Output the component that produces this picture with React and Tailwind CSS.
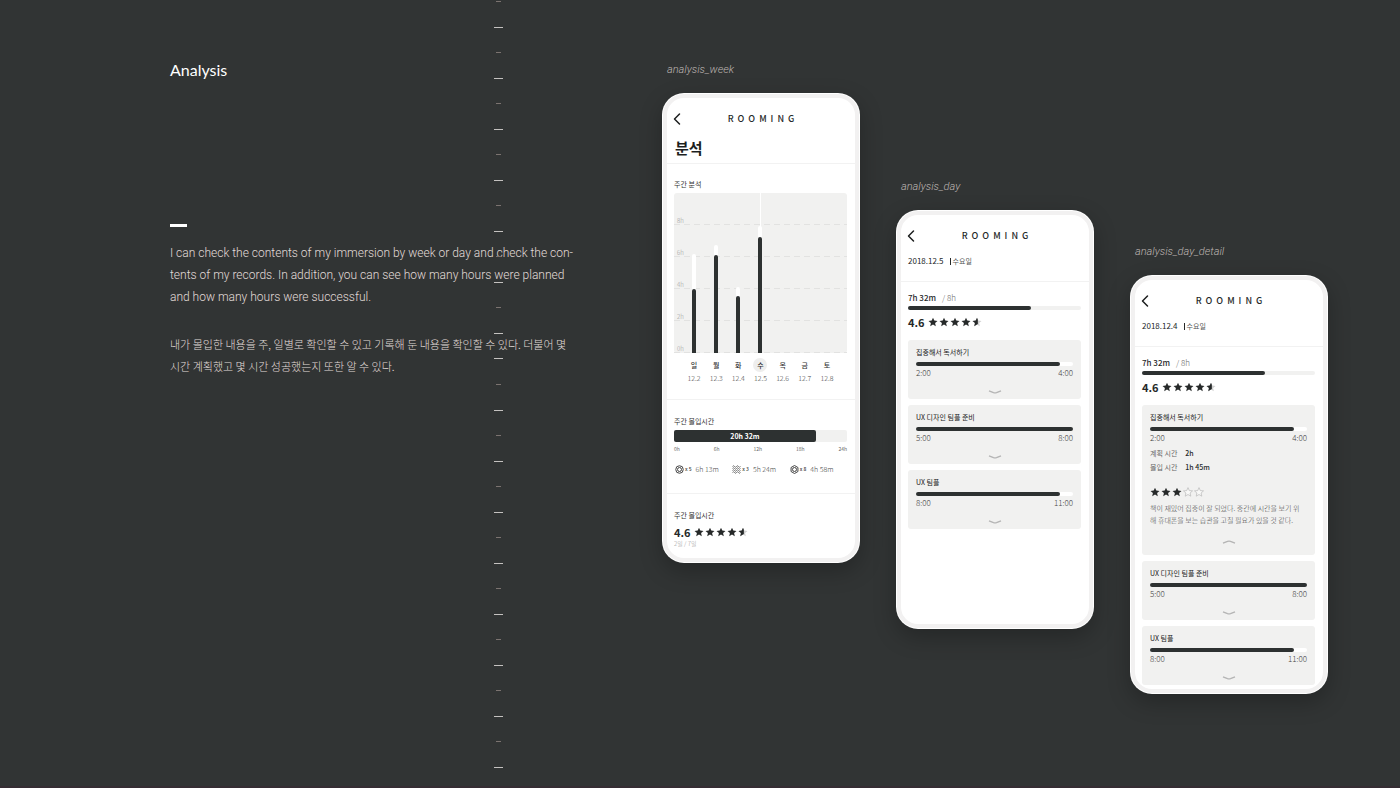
import { ChevronLeft } from "lucide-react";

const CJK = "font-['Noto_Sans_CJK_KR',sans-serif]";

const STAR = "M12 1.5l3.1 7.1 7.7.7-5.8 5.1 1.7 7.6L12 18l-6.7 4 1.7-7.6L1.2 9.3l7.7-.7z";

function Star({ kind = "full" }) {
  if (kind === "empty") {
    return (
      <svg viewBox="0 0 24 24" className="size-[10px]" fill="#f8f8f7" stroke="#b5b5b5" strokeWidth="1.6" aria-hidden="true">
        <path d={STAR} />
      </svg>
    );
  }
  if (kind === "half") {
    return (
      <svg viewBox="0 0 24 24" className="size-[10px]" aria-hidden="true">
        <path d={STAR} fill="#d0d0d0" />
        <path d="M12 1.5V18l-6.7 4 1.7-7.6L1.2 9.3l7.7-.7zM12 1.5l2 5V17l-2 1z" fill="#262929" />
      </svg>
    );
  }
  return (
    <svg viewBox="0 0 24 24" className="size-[10px]" fill="#262929" aria-hidden="true">
      <path d={STAR} />
    </svg>
  );
}

function Rating() {
  return (
    <div className="flex items-center gap-[3px] text-[#262929]">
      <span className="text-[11px] leading-4 font-bold">4.6</span>
      <span className="flex items-center gap-px">
        <Star />
        <Star />
        <Star />
        <Star />
        <Star kind="half" />
      </span>
    </div>
  );
}

function isLongTick(i) {
  return i < 14 ? i % 2 === 1 : i % 2 === 0;
}

function Ruler() {
  return (
    <div className="absolute top-px right-[159px] flex h-[767px] w-[9px] flex-col items-center justify-between" aria-hidden="true">
      {Array.from({ length: 31 }, (_, i) =>
        isLongTick(i) ? (
          <span key={i} className="h-px w-[9px] bg-[#c4c2c0]" />
        ) : (
          <span key={i} className="h-px w-[5px] bg-[#7b7370]" />
        )
      )}
    </div>
  );
}

function Phone({ label, height, className, children }) {
  return (
    <section className={`w-[198px] shrink-0 ${className}`}>
      <h2 className="mb-[15px] pl-[5px] text-[11px] leading-4 font-light italic text-[#bdb5b2] font-['Roboto',sans-serif]">{label}</h2>
      <div className={`rounded-[22px] bg-white p-px shadow-[0_8px_22px_rgba(0,0,0,0.25)] ${height}`}>
        <div className="h-full overflow-hidden rounded-[21px] border-4 border-[#f2f1f1] bg-white">
          <header className="relative flex h-10 items-center justify-center pt-[2px]">
            <button type="button" aria-label="Back" className="absolute left-0 text-[#1d1f1f]">
              <ChevronLeft className="size-5" strokeWidth={1.8} />
            </button>
            <span className="pl-1 text-[9px] leading-4 font-medium tracking-[4px] text-[#262929]">ROOMING</span>
          </header>
          {children}
        </div>
      </div>
    </section>
  );
}

function Bar({ fill, track }) {
  return (
    <div className={`h-1 rounded-full ${track}`}>
      <div className={`h-1 rounded-full bg-[#2d3131] ${fill}`} />
    </div>
  );
}

function Toggle({ open }) {
  return (
    <button type="button" aria-label={open ? "Collapse" : "Expand"} className="mx-auto block">
      <svg viewBox="0 0 14 4" className={`h-1 w-[14px] ${open ? "rotate-180" : ""}`} fill="none" stroke="#b4b4b4" strokeWidth="1.4" aria-hidden="true">
        <path d="M1 .8L5.500 2.600Q7 3.100 8.500 2.600L13 .8" />
      </svg>
    </button>
  );
}

function Session({ title, from, to, fill, children }) {
  return (
    <article className={`rounded-[3px] bg-[#f1f1f0] px-2 pt-[6px] ${children ? "pb-[11px]" : "pb-[5px]"}`}>
      <h3 className="text-[7px] leading-3 text-[#222]">{title}</h3>
      <div className="mt-1">
        <Bar fill={fill} track="bg-white" />
      </div>
      <div className="mt-px flex justify-between text-[8px] leading-3 font-light text-[#444]">
        <span>{from}</span>
        <span>{to}</span>
      </div>
      {children}
      <div className={children ? "mt-[14px]" : "mt-[11px]"}>
        <Toggle open={Boolean(children)} />
      </div>
    </article>
  );
}

function DaySummary({ date }) {
  return (
    <>
      <div className="flex h-[27px] items-start border-b border-[#f2f2f2] pr-2 pl-[7px] leading-3">
        <span className="text-[8px] text-[#1d1f1f]">{date}</span>
        <span className="mt-[3px] ml-[6px] h-[7px] w-px bg-[#262929]" />
        <span className="ml-[2px] text-[7px] text-[#555]">수요일</span>
      </div>
      <div className="pt-[10px] pr-2 pl-[7px]">
        <div className="text-[8px] leading-3 text-[#262929]">
          <span className="font-medium">7h 32m</span>
          <span className="ml-[6px] font-light text-[#666]">/ 8h</span>
        </div>
        <div className="mt-[2px]">
          <Bar fill="w-[71%]" track="bg-[#f1f1f0]" />
        </div>
        <div className="mt-1">
          <Rating />
        </div>
      </div>
    </>
  );
}

const DAYS = [
  { day: "일", date: "12.2", plan: "h-[99px]", done: "h-[64px]" },
  { day: "월", date: "12.3", plan: "h-[108px]", done: "h-[98px]" },
  { day: "화", date: "12.4", plan: "h-[66px]", done: "h-[57px]" },
  { day: "수", date: "12.5", plan: "h-[127px]", done: "h-[116px]", today: true },
  { day: "목", date: "12.6" },
  { day: "금", date: "12.7" },
  { day: "토", date: "12.8" },
];

function WeekChart() {
  return (
    <div>
      <div className="relative h-[160px] rounded-[3px] bg-[#f1f1f0]">
        <div className="flex h-full flex-col">
          {["8h", "6h", "4h", "2h", "0h"].map((h) => (
            <div key={h} className="flex h-8 shrink-0 flex-col justify-end">
              <span className="pl-[3px] text-[6px] leading-[6px] font-light text-[#999]">{h}</span>
              <span className="h-px bg-[repeating-linear-gradient(90deg,#e2e2e1_0_6px,transparent_6px_10px)]" />
            </div>
          ))}
        </div>
        <div className="absolute inset-0 grid grid-cols-7 px-[9px]">
          {DAYS.map((d) => (
            <div key={d.date} className="relative flex items-end justify-center">
              {d.today && <span className="absolute inset-y-0 w-px bg-white" />}
              {d.plan && (
                <div className={`relative flex w-1 items-end rounded-t-full bg-white ${d.plan}`}>
                  <div className={`w-1 rounded-t-full bg-[#2d3131] ${d.done}`} />
                </div>
              )}
            </div>
          ))}
        </div>
      </div>
      <div className="mt-[5px] grid grid-cols-7 px-[9px] text-center">
        {DAYS.map((d) => (
          <div key={d.date}>
            <div className={`mx-auto size-[14px] rounded-full text-[7px] leading-[14px] font-medium text-[#333] ${d.today ? "bg-[#eeeeed]" : ""}`}>{d.day}</div>
            <div className="text-[7px] leading-3 font-light text-[#444]">{d.date}</div>
          </div>
        ))}
      </div>
    </div>
  );
}

function Badge({ kind }) {
  return (
    <svg viewBox="0 0 18 18" className="size-[9px]" fill="none" stroke="#444" strokeWidth="2" aria-hidden="true">
      {kind === "ring" && (
        <>
          <circle cx="9" cy="9" r="7.5" />
          <circle cx="9" cy="9" r="4" />
        </>
      )}
      {kind === "wave" && (
        <path strokeWidth="1.5" d="M1 3q2-3 4 0t4 0 4 0 4 0M1 7q2-3 4 0t4 0 4 0 4 0M1 11q2-3 4 0t4 0 4 0 4 0M1 15q2-3 4 0t4 0 4 0 4 0" />
      )}
      {kind === "hex" && (
        <>
          <path d="M9 1l6.900 4v8L9 17l-6.900-4V5z" />
          <circle cx="9" cy="9" r="4" />
        </>
      )}
    </svg>
  );
}

const TOTALS = [
  { kind: "ring", count: "x 5", time: "6h 13m" },
  { kind: "wave", count: "x 3", time: "5h 24m" },
  { kind: "hex", count: "x 8", time: "4h 58m" },
];

export default function App() {
  return (
    <main className={`flex min-h-screen items-start border-b-2 border-[#352d33] bg-[#313434] pr-[72px] ${CJK}`}>
      <section className="relative min-w-0 flex-1 pt-[58px] pl-[170px]">
        <h1 className="text-[16px] leading-6 text-white font-['Lato',sans-serif]">Analysis</h1>
        <div className="mt-[142px] h-[3px] w-[17px] bg-white" />
        <div className="mt-[15px] whitespace-nowrap text-[#e2dcd9]">
          <p className="text-[12px] leading-[22px] font-light font-['Roboto',sans-serif]">
            I can check the contents of my immersion by week or day and check the con-
            <br />
            tents of my records. In addition, you can see how many hours were planned
            <br />
            and how many hours were successful.
          </p>
          <p className="mt-[25px] text-[11px] leading-[22px] font-light">
            내가 몰입한 내용을 주, 일별로 확인할 수 있고 기록해 둔 내용을 확인할 수 있다. 더불어 몇
            <br />
            시간 계획했고 몇 시간 성공했는지 또한 알 수 있다.
          </p>
        </div>
        <Ruler />
      </section>

      <div className="flex shrink-0 items-start gap-9">
        <Phone label="analysis_week" height="h-[470px]" className="pt-[62px]">
          <h3 className="h-[26px] border-b border-[#f2f2f2] px-2 text-[15px] leading-5 font-bold text-[#1d1f1f]">분석</h3>
          <div className="h-[236px] border-b border-[#f2f2f2] pt-[14px] pr-2 pl-[7px]">
            <h4 className="mb-[3px] text-[7px] leading-3 text-[#333]">주간 분석</h4>
            <WeekChart />
          </div>
          <div className="h-[94px] border-b border-[#f2f2f2] pt-[15px] pr-2 pl-[7px]">
            <h4 className="text-[7px] leading-3 text-[#333]">주간 몰입시간</h4>
            <div className="mt-[3px] h-3 rounded-[2px] bg-[#f1f1f0]">
              <div className="w-[82%] rounded-[2px] bg-[#2d3131] text-center text-[7px] leading-3 font-bold text-white">20h 32m</div>
            </div>
            <div className="mt-[3px] flex justify-between text-[5px] leading-2 text-[#666]">
              <span>0h</span>
              <span>6h</span>
              <span>12h</span>
              <span>18h</span>
              <span>24h</span>
            </div>
            <ul className="mt-[10px] grid grid-cols-3 pl-px text-[#444]">
              {TOTALS.map((t) => (
                <li key={t.kind} className="flex items-center leading-3">
                  <Badge kind={t.kind} />
                  <span className="ml-px text-[5px] font-medium">{t.count}</span>
                  <span className="ml-1 text-[7px] font-light">{t.time}</span>
                </li>
              ))}
            </ul>
          </div>
          <div className="pt-[15px] pr-2 pl-[7px]">
            <h4 className="text-[7px] leading-3 text-[#333]">주간 몰입시간</h4>
            <div className="mt-[3px]">
              <Rating />
            </div>
            <p className="text-[6px] leading-[7px] font-light text-[#999]">2일 / 7일</p>
          </div>
        </Phone>

        <Phone label="analysis_day" height="h-[419px]" className="pt-[179px]">
          <DaySummary date="2018.12.5" />
          <div className="mt-[10px] space-y-[6px] pr-2 pl-[7px]">
            <Session title="집중해서 독서하기" from="2:00" to="4:00" fill="w-[92%]" />
            <Session title="UX 디자인 팀플 준비" from="5:00" to="8:00" fill="w-full" />
            <Session title="UX 팀플" from="8:00" to="11:00" fill="w-[92%]" />
          </div>
        </Phone>

        <Phone label="analysis_day_detail" height="h-[419px]" className="pt-[244px]">
          <DaySummary date="2018.12.4" />
          <div className="mt-[10px] space-y-[6px] pr-2 pl-[7px]">
            <Session title="집중해서 독서하기" from="2:00" to="4:00" fill="w-[92%]">
              <dl className="mt-[2px] grid grid-cols-[auto_1fr] gap-x-2 text-[7px] leading-[14px] text-[#666]">
                <dt>계획 시간</dt>
                <dd className="font-medium text-[#262929]">2h</dd>
                <dt>몰입 시간</dt>
                <dd className="font-medium text-[#262929]">1h 45m</dd>
              </dl>
              <div className="mt-[13px] flex gap-px">
                <Star />
                <Star />
                <Star />
                <Star kind="empty" />
                <Star kind="empty" />
              </div>
              <p className="mt-[5px] text-[7px] leading-3 font-light whitespace-nowrap text-[#444]">
                책이 재밌어 집중이 잘 되었다. 중간에 시간을 보기 위
                <br />
                해 휴대폰을 보는 습관을 고칠 필요가 있을 것 같다.
              </p>
            </Session>
            <Session title="UX 디자인 팀플 준비" from="5:00" to="8:00" fill="w-full" />
            <Session title="UX 팀플" from="8:00" to="11:00" fill="w-[92%]" />
          </div>
        </Phone>
      </div>
    </main>
  );
}
